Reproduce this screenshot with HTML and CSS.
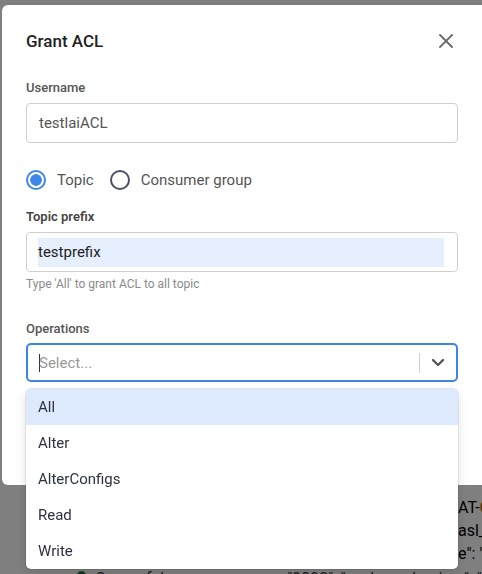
FILE: index.html
```html
<!DOCTYPE html>
<html lang="en">
<head>
<meta charset="utf-8">
<title>Grant ACL</title>
<link rel="stylesheet" href="styles.css">
</head>
<body>
<div class="bg">
  <div class="bg-code">
    <div class="bg-line">AT-<span class="orange">C</span></div>
    <div class="bg-line">asl_<span class="orange">m</span></div>
    <div class="bg-line">e": "</div>
  </div>
  <div class="bg-row">
    <span class="dot"></span><span class="bg-name">Congo-fake</span>
    <span class="bg-tail">"9092", "sasl_mechanism": "</span>
  </div>
</div>
<div class="overlay"></div>
<div class="modal">
  <div class="modal-header">
    <h2 class="title">Grant ACL</h2>
    <button class="close" aria-label="Close">
      <svg width="14" height="14" viewBox="0 0 14 14"><path d="M1 1 L13 13 M13 1 L1 13" stroke="#666" stroke-width="1.8" fill="none" stroke-linecap="square"/></svg>
    </button>
  </div>

  <div class="field">
    <div class="label">Username</div>
    <div class="input"><span class="value-muted">testlaiACL</span></div>
  </div>

  <div class="radios">
    <label class="radio"><span class="dotbox checked"></span><span>Topic</span></label>
    <label class="radio"><span class="dotbox"></span><span>Consumer group</span></label>
  </div>

  <div class="field tight">
    <div class="label strong">Topic prefix</div>
    <div class="input"><span class="selected-text">testprefix</span></div>
    <div class="help">Type 'All' to grant ACL to all topic</div>
  </div>

  <div class="field ops">
    <div class="label">Operations</div>
    <div class="select-wrap">
      <div class="select">
        <span class="caret"></span><span class="placeholder">Select...</span>
        <span class="sep"></span>
        <span class="chev"><svg width="14" height="9" viewBox="0 0 14 9"><path d="M2 2 L7 7 L12 2" stroke="#555" stroke-width="2.4" fill="none" stroke-linecap="round" stroke-linejoin="round"/></svg></span>
      </div>
      <ul class="menu">
        <li class="active">All</li>
        <li>Alter</li>
        <li>AlterConfigs</li>
        <li>Read</li>
        <li>Write</li>
      </ul>
    </div>
  </div>
</div>
</body>
</html>
```
FILE: styles.css
```css
* { box-sizing: border-box; }
html, body { margin: 0; padding: 0; }
body {
  width: 482px;
  height: 574px;
  overflow: hidden;
  background: #ffffff;
  font-family: Roboto, "Liberation Sans", sans-serif;
  color: #333;
}
.bg {
  padding-top: 496px;
  font-size: 16px;
}
.bg-code {
  padding-left: 458px;
  white-space: nowrap;
}
.bg-line {
  height: 23px;
  line-height: 23px;
  color: #000;
}
.orange { color: #c05a00; }
.bg-row {
  display: flex;
  align-items: center;
  height: 24px;
  margin-top: 1px;
  padding-left: 76px;
  white-space: nowrap;
}
.dot {
  width: 14px; height: 14px; border-radius: 50%;
  background: #1b7a3a;
  margin-right: 8px;
}
.bg-name { width: 244px; }
.overlay {
  position: fixed;
  inset: 0;
  background: rgba(0,0,0,0.5);
}
.modal {
  position: fixed;
  top: 5px;
  left: 2px;
  width: 520px;
  height: 480px;
  background: #fff;
  border-radius: 6px;
  padding: 23px 0 0 24px;
}
.modal-header {
  width: 432px;
  display: flex;
  justify-content: space-between;
  align-items: center;
  height: 26px;
}
.title {
  margin: 0;
  font-size: 17px;
  font-weight: 500;
  color: #222;
}
.close {
  border: 0; background: none; padding: 0;
  width: 14px; height: 14px;
  margin-right: 5px;
  display: flex;
}
.field { width: 432px; }
.label {
  font-size: 13px;
  font-weight: 500;
  color: #555;
  line-height: 18px;
}
.label.strong { font-weight: 600; color: #444; }
.modal-header + .field { margin-top: 25px; }
.field > .label { margin-bottom: 6px; }
.input {
  height: 40px;
  border: 1px solid #cfcfcf;
  border-radius: 4px;
  display: flex;
  align-items: center;
  padding: 0 12px;
  font-size: 15px;
}
.value-muted { color: #555; }
.selected-text {
  display: flex;
  align-items: center;
  width: 100%;
  height: 29px;
  background: #e6effd;
  color: #222;
  margin-left: -1px;
}
.radios {
  display: flex;
  align-items: center;
  gap: 16px;
  margin-top: 27px;
  height: 20px;
  font-size: 15px;
  color: #555;
}
.radio { display: flex; align-items: center; gap: 11px; }
.dotbox {
  width: 20px; height: 20px;
  border-radius: 50%;
  border: 2px solid #4b5163;
  background: #fff;
}
.dotbox.checked {
  border-color: #3d86ea;
  background: radial-gradient(circle, #3d86ea 0 5.5px, #fff 6px);
}
.tight { margin-top: 18px; }
.help {
  margin-top: 5px;
  font-size: 12px;
  color: #8a8a8a;
  line-height: 14px;
}
.ops { margin-top: 29px; }
.ops > .label { margin-bottom: 5px; }
.select-wrap { position: relative; }
.select {
  height: 39px;
  border: 2px solid #3d86e0;
  border-radius: 5px;
  display: flex;
  align-items: center;
  padding-left: 11px;
  font-size: 15px;
}
.caret {
  width: 1px; height: 18px; background: #333; margin-right: -1px;
}
.placeholder { color: #999; flex: 1; }
.sep { width: 1px; height: 20px; background: #cfcfcf; }
.chev {
  width: 36px;
  display: flex;
  justify-content: center;
  align-items: center;
}
.menu {
  position: absolute;
  top: 46px;
  left: 0;
  width: 432px;
  margin: 0;
  padding: 0;
  list-style: none;
  background: #fff;
  border-radius: 5px;
  box-shadow: 0 0 0 1px rgba(0,0,0,0.08), 0 4px 11px rgba(0,0,0,0.12);
  overflow: hidden;
}
.menu li {
  height: 36px;
  line-height: 36px;
  padding-left: 12px;
  font-size: 15px;
  color: #2e3142;
}
.menu li.active { background: #dde9fc; }
```
